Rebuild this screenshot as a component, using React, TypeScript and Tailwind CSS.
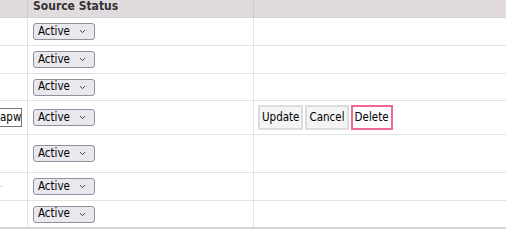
import { ChevronDown } from "lucide-react";

const rows = [
  { h: "h-[27px]" },
  { h: "h-[27px]" },
  { h: "h-[26px]" },
  { h: "h-[33px]", editing: true },
  { h: "h-[37px]" },
  { h: "h-[27px]", dot: true },
  { h: "h-[26px]" },
];

const StatusSelect = () => (
  <div className="flex items-center justify-between w-[62px] h-[17px] pl-[4px] pr-[7px] rounded-[3px] border border-[#8f8f9d] bg-[#e9e9ed] text-[11.5px] text-black">
    <span>Active</span>
    <ChevronDown size={9} strokeWidth={2.5} className="text-[#333]" />
  </div>
);

const App = () => {
  return (
    <div className="w-[506px] h-[246px] bg-white overflow-hidden" style={{ fontFamily: "Tahoma, 'DejaVu Sans Condensed', 'DejaVu Sans', sans-serif" }}>
      <div className="flex h-[18px] bg-[#e1dbdf] border-b border-[#d6d0d4]">
        <div className="w-[28px] border-r border-[#d0cacd]" />
        <div className="w-[226px] border-r border-[#d0cacd] pl-[5px] text-[12px] font-bold text-[#333] leading-[13px]">Source Status</div>
        <div className="flex-1" />
      </div>
      {rows.map((r, i) => (
        <div key={i} className={`flex ${r.h} box-content border-b ${i === rows.length - 1 ? "border-b-2 border-[#d4d4d4]" : "border-[#e2e2e2]"}`}>
          <div className="w-[28px] border-r border-[#e2e2e2] flex items-center overflow-hidden relative">
            {r.editing && (
              <div className="ml-[-20px] w-[42px] h-[19px] border border-[#767676] bg-white text-[11.5px] flex items-center pl-[19px] overflow-hidden whitespace-nowrap">apwo</div>
            )}
            {r.dot && <div className="absolute left-[1px] top-[13px] w-[1px] h-[1px] bg-[#8aa0c0]" />}
          </div>
          <div className="w-[226px] border-r border-[#e2e2e2] flex items-center pl-[5px]">
            <StatusSelect />
          </div>
          <div className="flex-1 flex items-center pl-[4px] gap-[2px]">
            {r.editing && (
              <>
                <button className="h-[25px] px-[2px] border-2 border-[#dcdcdc] bg-[#f4f4f4] text-[11.5px] text-black">Update</button>
                <button className="h-[25px] px-[2px] border-2 border-[#dcdcdc] bg-[#f4f4f4] text-[11.5px] text-black">Cancel</button>
                <button className="h-[25px] px-[2px] border-2 border-[#ee6a92] bg-white text-[11.5px] text-black">Delete</button>
              </>
            )}
          </div>
        </div>
      ))}
    </div>
  );
};

export default App;
